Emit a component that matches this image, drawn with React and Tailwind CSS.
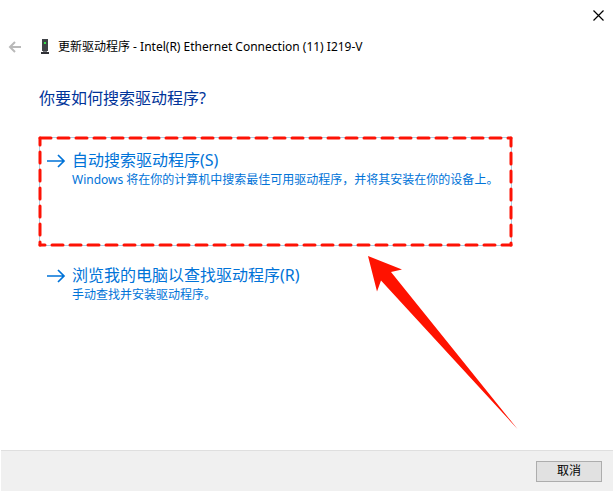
function CommandLink({ title, detail, highlighted }) {
  return (
    <button
      type="button"
      className={
        "relative flex w-full items-start gap-[5px] border pl-1 pt-3 text-left text-[#0073d8] " +
        (highlighted ? "h-[109px] border-[#a9cfe4]" : "border-transparent")
      }
    >
      <svg viewBox="0 0 23 22" className="h-[22px] w-[23px] shrink-0" fill="none" stroke="currentColor" strokeWidth="1.7" aria-hidden="true">
        <path d="M3 11H20M14 5L20 11L14 17" />
      </svg>
      <span className="flex flex-col whitespace-nowrap">
        <span className="text-base leading-5">{title}</span>
        <span className="text-xs leading-5">{detail}</span>
      </span>
      {highlighted && (
        <svg
          className="absolute inset-0 h-full w-full overflow-visible"
          fill="none"
          stroke="#fd1205"
          strokeWidth="3"
          strokeLinecap="round"
          strokeDasharray="11 7"
          aria-hidden="true"
        >
          <line x1="0" y1="0" x2="100%" y2="0" />
          <line x1="0" y1="100%" x2="100%" y2="100%" strokeDashoffset="6" />
          <line x1="0" y1="0" x2="0" y2="100%" strokeDashoffset="4" />
          <line x1="100%" y1="0" x2="100%" y2="100%" strokeDashoffset="3" />
        </svg>
      )}
    </button>
  );
}

export default function App() {
  return (
    <div className="relative flex min-h-screen flex-col bg-white p-px font-['Noto_Sans','Noto_Sans_CJK_SC',sans-serif] text-xs text-black">
      <div className="flex h-[29px] justify-end">
        <button type="button" aria-label="关闭" className="flex w-[30px] items-center justify-center">
          <svg viewBox="0 0 11 11" className="h-[11px] w-[11px]" stroke="#000" strokeWidth="1.2" aria-hidden="true">
            <path d="M0.5 0.5L10.5 10.5M10.5 0.5L0.5 10.5" />
          </svg>
        </button>
      </div>

      <header className="flex h-[34px] items-center pl-[7px]">
        <button type="button" aria-label="返回" disabled className="mr-[18px]">
          <svg viewBox="0 0 14 12" className="h-3 w-[14px]" fill="none" stroke="#b9b9b9" strokeWidth="2" aria-hidden="true">
            <path d="M13 6H2M7 1L2 6L7 11" />
          </svg>
        </button>
        <svg viewBox="0 0 10 16" className="mr-2 h-4 w-[10px]" aria-hidden="true">
          <path d="M2 0H8V12H2Z" fill="#404347" />
          <path d="M3 12H7V13H3Z" fill="#77797c" />
          <path d="M1 13H9V15H1Z" fill="#303236" />
          <path d="M4 3H6V5H4Z" fill="#35e34b" />
        </svg>
        <p className="whitespace-nowrap">更新驱动程序 - Intel(R) Ethernet Connection (11) I219-V</p>
      </header>

      <main className="flex grow flex-col pl-[38px] pr-[101px] pt-[22px]">
        <h1 className="mb-[27px] text-base leading-6 text-[#003399]">你要如何搜索驱动程序?</h1>
        <div className="flex flex-col gap-[6px]">
          <CommandLink
            highlighted
            title="自动搜索驱动程序(S)"
            detail="Windows 将在你的计算机中搜索最佳可用驱动程序，并将其安装在你的设备上。"
          />
          <CommandLink title="浏览我的电脑以查找驱动程序(R)" detail="手动查找并安装驱动程序。" />
        </div>
      </main>

      <footer className="flex h-[41px] items-center justify-end border-t border-[#dfdfdf] bg-[#f0f0f0] pr-[11px]">
        <button type="button" className="h-[21px] w-[66px] border border-[#adadad] bg-[#e1e1e1] leading-[18px]">
          取消
        </button>
      </footer>

      <svg viewBox="0 0 150 174" className="pointer-events-none absolute left-[368px] top-[256px] h-[174px] w-[150px]" aria-hidden="true">
        <path d="M0 0L34 13.500L23 16L149.500 173L13 24.500L9 35.500Z" fill="#ff1200" />
      </svg>
    </div>
  );
}
